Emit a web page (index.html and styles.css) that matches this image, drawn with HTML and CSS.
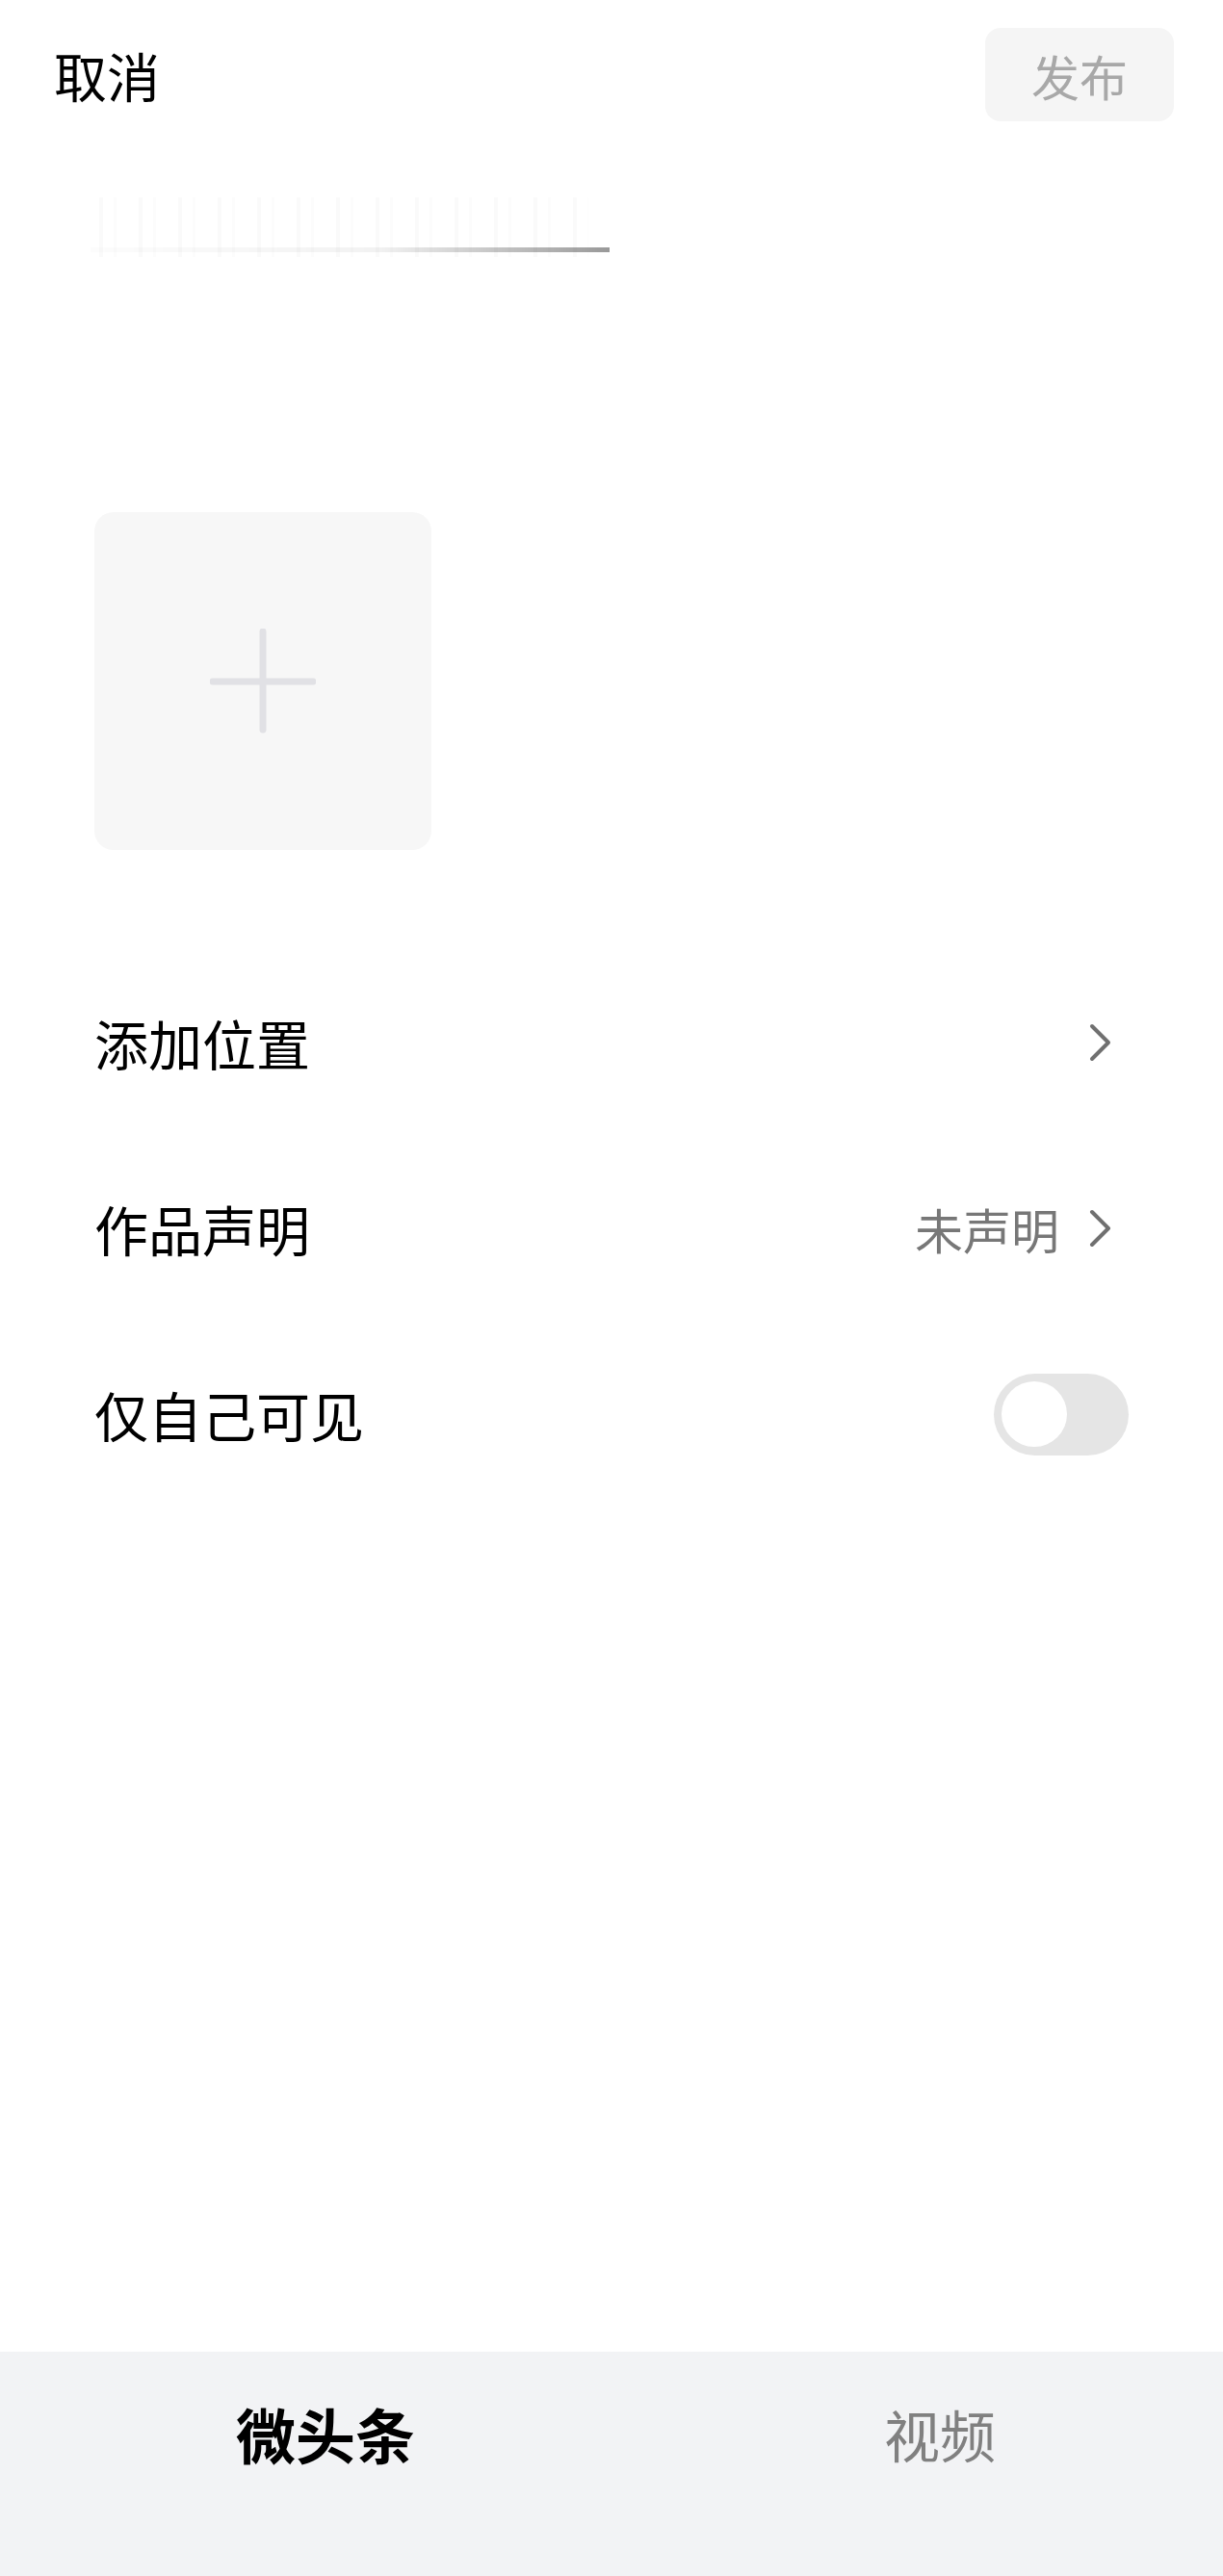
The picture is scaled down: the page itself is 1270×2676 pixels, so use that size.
FILE: index.html
```html
<!DOCTYPE html>
<html lang="zh-CN">
<head>
    <meta charset="utf-8">
    <meta name="viewport" content="width=device-width, user-scalable=no">
    <title>发布微头条</title>
    <link rel="stylesheet" href="styles.css">
</head>
<body>
    <div id="page">
        <div id="topbar">
            <div class="cancel">取消</div>
            <button class="publish" disabled>发布</button>
        </div>

        <div class="title-field">
            <div class="title-blur"></div>
        </div>

        <div class="add-photo">
            <svg width="110" height="110" viewBox="0 0 110 110">
                <path d="M55 3 V105 M3 55 H107" stroke="#e1e1e5" stroke-width="7" stroke-linecap="round" fill="none"/>
            </svg>
        </div>

        <div class="options">
            <div class="option">
                <span class="label">添加位置</span>
                <span class="value">
                    <svg class="chevron" width="26" height="42" viewBox="0 0 26 42">
                        <path d="M4 4 L21 21 L4 38" stroke="#707070" stroke-width="4" stroke-linecap="round" stroke-linejoin="round" fill="none"/>
                    </svg>
                </span>
            </div>
            <div class="option">
                <span class="label">作品声明</span>
                <span class="value">
                    <span class="hint">未声明</span>
                    <svg class="chevron" width="26" height="42" viewBox="0 0 26 42">
                        <path d="M4 4 L21 21 L4 38" stroke="#707070" stroke-width="4" stroke-linecap="round" stroke-linejoin="round" fill="none"/>
                    </svg>
                </span>
            </div>
            <div class="option">
                <span class="label">仅自己可见</span>
                <span class="switch"><span class="knob"></span></span>
            </div>
        </div>

        <div id="tabs">
            <div class="tab active">微头条</div>
            <div class="tab">视频</div>
        </div>
    </div>
</body>
</html>
```

FILE: styles.css
```css
body {
    margin: 0;
    padding: 0;
    background-color: #fff;
    color: #000;
    font-family: "Noto Sans CJK SC", "Noto Sans", sans-serif;
}

#page {
    width: 1270px;
    height: 2676px;
    display: flex;
    flex-direction: column;
    overflow: hidden;
}

#topbar {
    display: flex;
    align-items: center;
    justify-content: space-between;
    padding: 29px 51px 0 56px;
}

.cancel {
    font-size: 55px;
    line-height: 1;
}

.publish {
    width: 196px;
    height: 97px;
    border: none;
    border-radius: 16px;
    background-color: #f5f5f5;
    color: #a8a8a8;
    font-family: inherit;
    font-size: 50px;
    line-height: 1;
    padding: 0;
}

.title-field {
    margin: 79px 0 0 94px;
    width: 544px;
    height: 67px;
}

.title-blur {
    height: 100%;
    background-image:
        linear-gradient(to right, rgba(0,0,0,0.01), rgba(0,0,0,0.05) 55%, rgba(0,0,0,0.4) 99%, transparent 99%),
        repeating-linear-gradient(to right, transparent 0, transparent 9px, rgba(0,0,0,0.018) 9px, rgba(0,0,0,0.018) 13px, transparent 13px, transparent 24px, rgba(0,0,0,0.012) 24px, rgba(0,0,0,0.012) 27px, transparent 27px, transparent 41px);
    background-size: 100% 5px, 95% 62px;
    background-position: 0 52px, 0 0;
    background-repeat: no-repeat;
    border-radius: 3px;
}

.add-photo {
    margin: 260px 0 0 98px;
    width: 350px;
    height: 351px;
    border-radius: 20px;
    background-color: #f7f7f7;
    display: flex;
    align-items: center;
    justify-content: center;
}

.options {
    margin-top: 150px;
    display: flex;
    flex-direction: column;
    gap: 93px;
}

.option {
    height: 100px;
    display: flex;
    align-items: center;
    justify-content: space-between;
    padding: 0 98px 0 98px;
}

.label {
    font-size: 56px;
    line-height: 1;
}

.value {
    display: flex;
    align-items: center;
    gap: 30px;
    margin-right: 16px;
}

.hint {
    font-size: 50px;
    line-height: 1;
    color: #777;
}

.chevron {
    display: block;
}

.switch {
    width: 140px;
    height: 85px;
    border-radius: 43px;
    background-color: #e5e5e5;
    display: flex;
    align-items: center;
    padding-left: 8px;
    box-sizing: border-box;
}

.knob {
    width: 68px;
    height: 68px;
    border-radius: 50%;
    background-color: #fff;
}

#tabs {
    margin-top: auto;
    height: 233px;
    background-color: #f2f3f5;
    display: flex;
    gap: 338px;
    padding: 54px 0 0 188px;
    box-sizing: border-box;
}

.tab {
    width: 300px;
    text-align: center;
    font-size: 58px;
    line-height: 62px;
    color: #808080;
}

.tab.active {
    font-size: 62px;
    font-weight: bold;
    color: #000;
}
```
